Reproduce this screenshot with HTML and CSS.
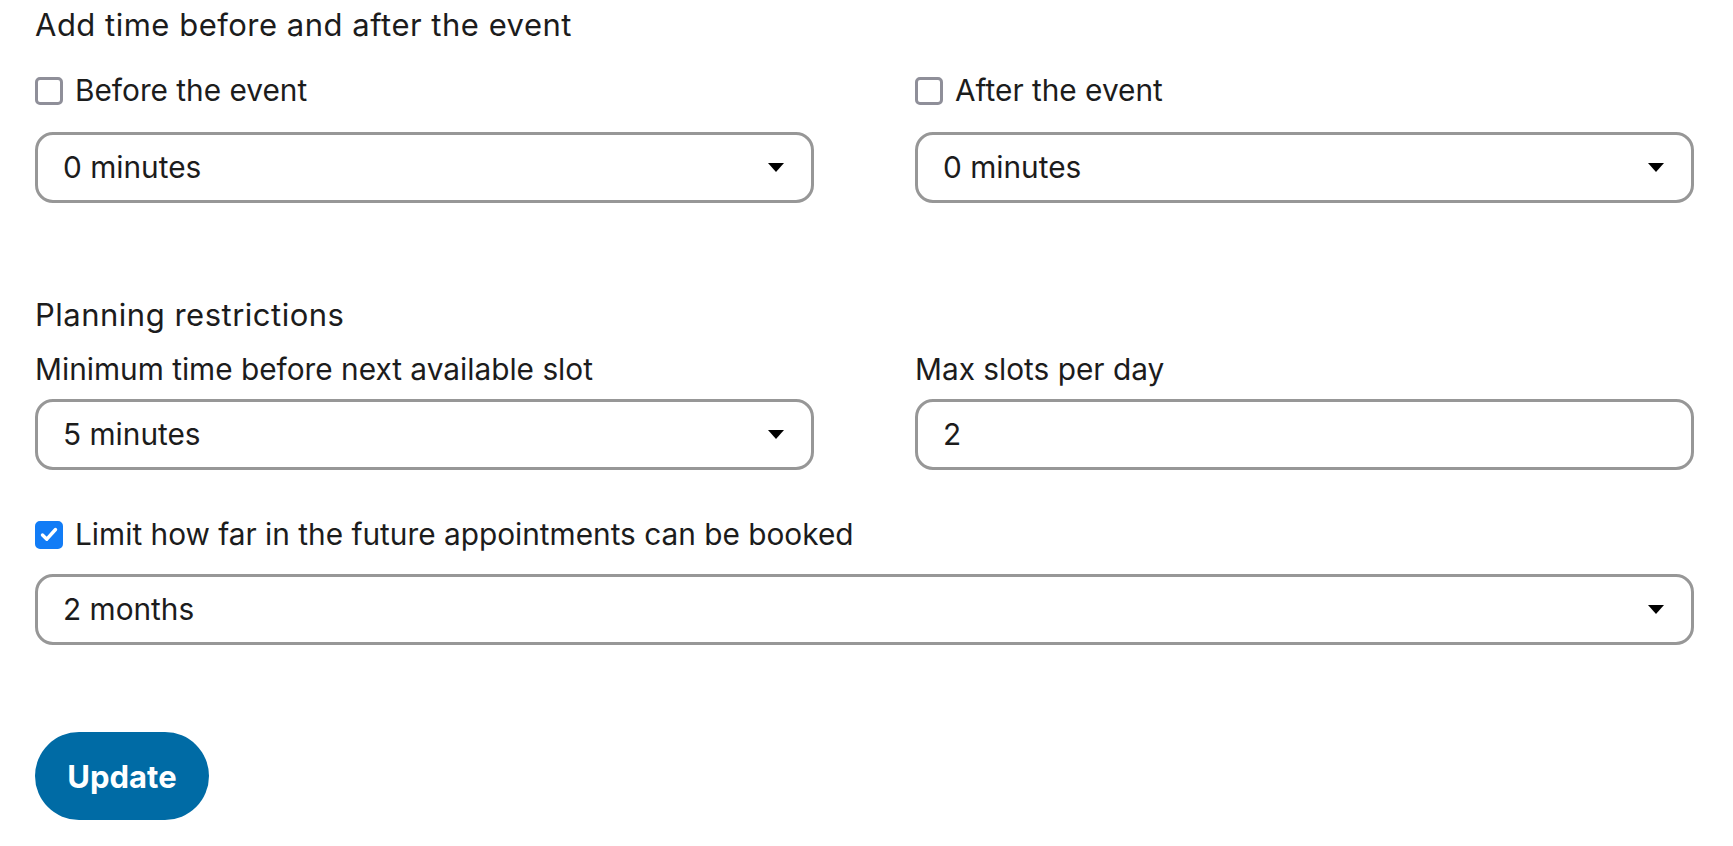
FILE: index.html
```html
<!DOCTYPE html>
<html lang="en">
<head>
<meta charset="utf-8">
<title>Settings</title>
<link rel="stylesheet" href="styles.css">
</head>
<body>
<form class="page">
  <section class="section">
    <h2 class="section-title">Add time before and after the event</h2>
    <div class="grid">
      <div class="field">
        <label class="check"><span class="box"></span><span>Before the event</span></label>
        <div class="select"><span>0 minutes</span><svg class="arrow" width="16" height="9" viewBox="0 0 16 9"><path d="M0 0H16L8 9Z" fill="#000"/></svg></div>
      </div>
      <div class="field">
        <label class="check"><span class="box"></span><span>After the event</span></label>
        <div class="select"><span>0 minutes</span><svg class="arrow" width="16" height="9" viewBox="0 0 16 9"><path d="M0 0H16L8 9Z" fill="#000"/></svg></div>
      </div>
    </div>
  </section>

  <section class="section second">
    <h2 class="section-title">Planning restrictions</h2>
    <div class="grid labels">
      <div class="field">
        <div class="label">Minimum time before next available slot</div>
        <div class="select"><span>5 minutes</span><svg class="arrow" width="16" height="9" viewBox="0 0 16 9"><path d="M0 0H16L8 9Z" fill="#000"/></svg></div>
      </div>
      <div class="field">
        <div class="label">Max slots per day</div>
        <div class="select input"><span>2</span></div>
      </div>
    </div>
    <div class="field wide">
      <label class="check check-wide"><span class="box checked"><svg width="18" height="15" viewBox="0 0 18 15"><path d="M2.5 8L6.8 12.2L15.5 2.5" fill="none" stroke="#fff" stroke-width="3.4" stroke-linecap="round" stroke-linejoin="round"/></svg></span><span>Limit how far in the future appointments can be booked</span></label>
      <div class="select"><span>2 months</span><svg class="arrow" width="16" height="9" viewBox="0 0 16 9"><path d="M0 0H16L8 9Z" fill="#000"/></svg></div>
    </div>
  </section>

  <div class="actions">
    <button type="button" class="btn">Update</button>
  </div>
</form>
</body>
</html>
```

FILE: styles.css
```css
html, body {
  margin: 0;
  padding: 0;
  background: #fff;
}
body {
  font-family: Inter, "Noto Sans", "Liberation Sans", sans-serif;
  font-size: 29.8px;
  line-height: 35px;
  color: #1c1c1c;
}
.page {
  width: 1659px;
  padding: 7px 0 0 35px;
}
.section-title {
  margin: 0;
  font-size: 31px;
  letter-spacing: 0.5px;
  font-weight: 400;
  line-height: 35px;
}
.grid {
  display: grid;
  grid-template-columns: 1fr 1fr;
  column-gap: 101px;
  margin-top: 31px;
}
.grid.labels {
  margin-top: 20px;
}
.field {
  display: flex;
  flex-direction: column;
}
.label {
  margin-bottom: 12px;
}
.check {
  display: flex;
  align-items: center;
  gap: 12px;
  margin-bottom: 24px;
}
.check-wide {
  margin-bottom: 22px;
}
.box {
  width: 28px;
  height: 28px;
  box-sizing: border-box;
  border: 3px solid #8f8f99;
  border-radius: 5px;
  background: #fff;
  display: flex;
  align-items: center;
  justify-content: center;
  flex: none;
}
.box.checked {
  background: #127cf6;
  border-color: #127cf6;
}
.select {
  height: 71px;
  box-sizing: border-box;
  border: 3px solid #979797;
  border-radius: 18px;
  padding: 0 27px 0 25px;
  display: flex;
  align-items: center;
  justify-content: space-between;
  background: #fff;
}
.arrow {
  flex: none;
}
.second {
  margin-top: 94px;
}
.wide {
  margin-top: 47px;
}
.actions {
  margin-top: 87px;
}
.btn {
  width: 174px;
  height: 88px;
  border: none;
  border-radius: 44px;
  background: #006ba5;
  color: #fff;
  font-family: Inter, "Noto Sans", "Liberation Sans", sans-serif;
  font-size: 31px;
  font-weight: 700;
  padding: 0;
  cursor: pointer;
}
```
